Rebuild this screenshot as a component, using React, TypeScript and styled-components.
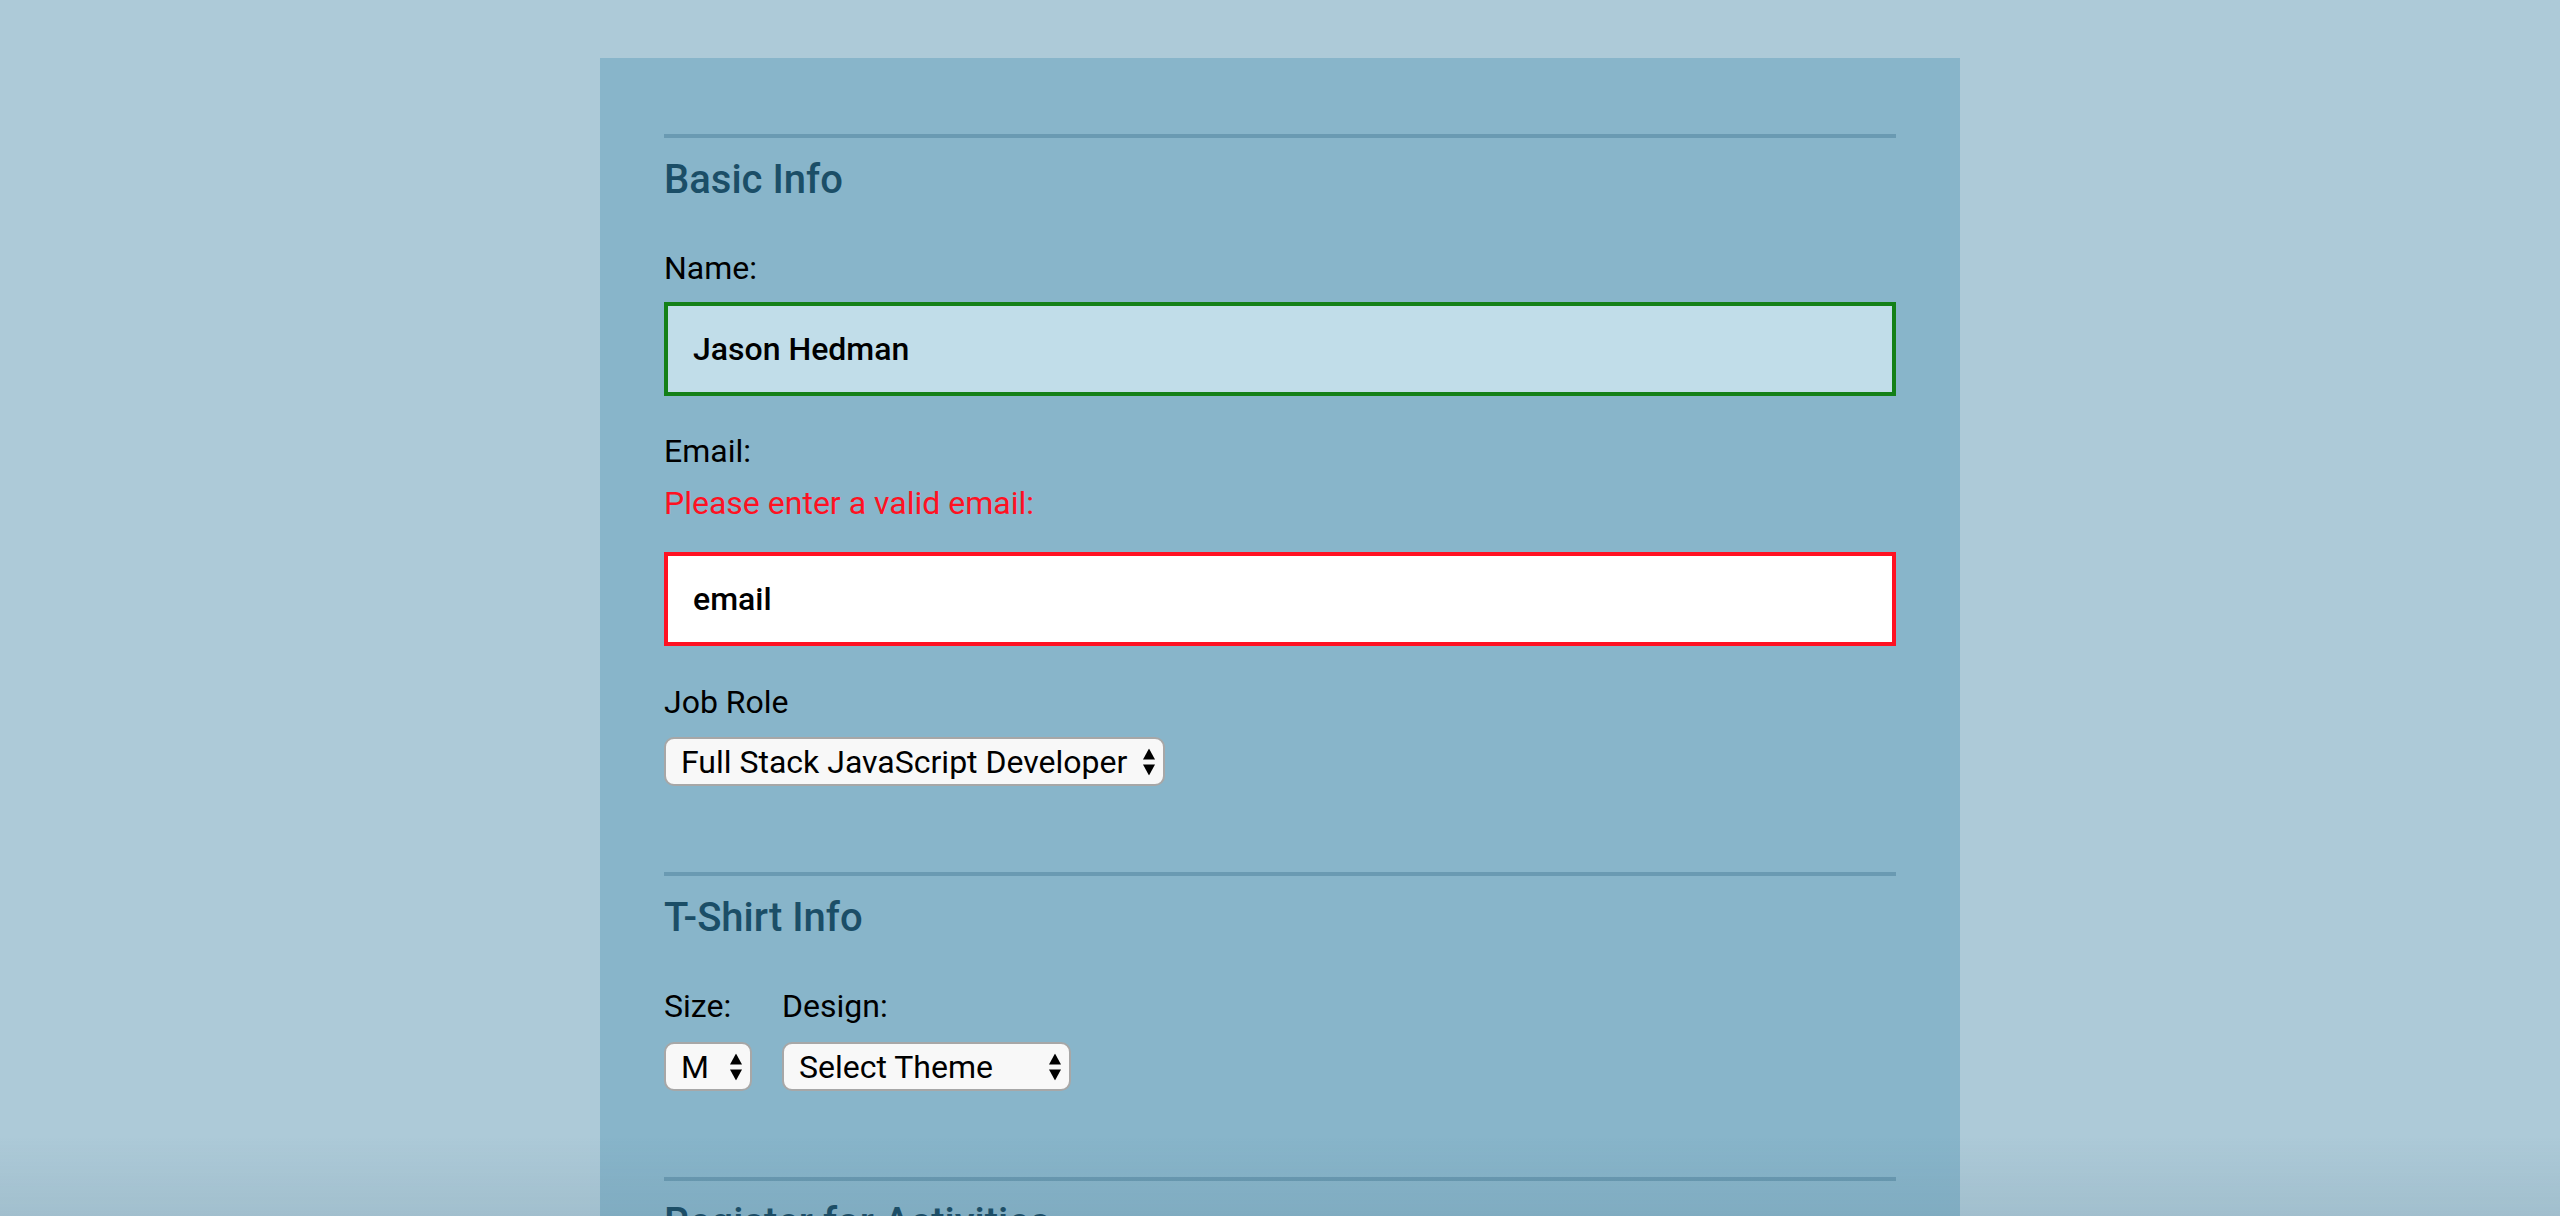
import React from 'react';
import styled, { createGlobalStyle } from 'styled-components';

const GlobalStyle = createGlobalStyle`
  html, body {
    margin: 0;
    padding: 0;
  }
  body {
    background: #adcad8;
    font-family: Roboto, "Liberation Sans", sans-serif;
    color: #000;
  }
`;

// soft darker band at the bottom of the window, like the window shadow in the shot
const Shade = styled.div`
  position: fixed;
  left: 0;
  right: 0;
  bottom: 0;
  height: 80px;
  pointer-events: none;
  background: linear-gradient(to bottom, rgba(50, 85, 105, 0), rgba(50, 85, 105, 0.09));
`;

const Container = styled.form`
  box-sizing: border-box;
  width: 1360px;
  margin: 58px auto 0;
  padding: 76px 64px 240px;
  background: #88b5ca;
`;

const Section = styled.section`
  border-top: 4px solid #6a9ab2;
  padding-top: 18px;
  margin-bottom: 86px;
`;

const Heading = styled.h2`
  margin: 0 0 46px;
  font-size: 40px;
  line-height: 47px;
  font-weight: 500;
  color: #1b4e67;
`;

const Label = styled.label<{ $gap?: number }>`
  display: block;
  font-size: 32px;
  line-height: 38px;
  margin-bottom: ${(p) => p.$gap ?? 15}px;
`;

const ErrorText = styled.div`
  font-size: 32px;
  line-height: 38px;
  color: #ff1122;
  margin: 14px 0 30px;
`;

const TextInput = styled.input<{ $state: 'ok' | 'bad' }>`
  display: block;
  box-sizing: border-box;
  width: 100%;
  height: 94px;
  margin: 0 0 36px;
  padding: 0 25px;
  border: 4px solid ${(p) => (p.$state === 'ok' ? '#148018' : '#ff1122')};
  border-radius: 0;
  background: ${(p) => (p.$state === 'ok' ? '#c1dde9' : '#ffffff')};
  font-family: Roboto, "Liberation Sans", sans-serif;
  font-size: 32px;
  font-weight: 500;
  color: #000;
  outline: none;
`;

const SelectWrap = styled.div<{ $w: number }>`
  position: relative;
  width: ${(p) => p.$w}px;
`;

const Select = styled.select`
  appearance: none;
  -webkit-appearance: none;
  display: block;
  box-sizing: border-box;
  width: 100%;
  height: 49px;
  margin: 0;
  padding: 0 26px 0 15px;
  border: 2px solid #a7a7a7;
  border-radius: 10px;
  background: #f8f8f8;
  font-family: Roboto, "Liberation Sans", sans-serif;
  font-size: 32px;
  color: #000;
  outline: none;
`;

const Arrows = styled.svg`
  position: absolute;
  right: 10px;
  top: 50%;
  transform: translateY(-50%);
  pointer-events: none;
`;

const Row = styled.div`
  display: flex;
  gap: 30px;
`;

const Group = styled.div``;

const CheckRow = styled.label`
  display: block;
  font-size: 32px;
  line-height: 38px;
  margin-bottom: 20px;
`;

function Dropdown({ width, children }: { width: number; children: React.ReactNode }) {
  return (
    <SelectWrap $w={width}>
      <Select>{children}</Select>
      <Arrows width="12" height="27" viewBox="0 0 12 27">
        <polygon points="6,0 12,11 0,11" fill="#000" />
        <polygon points="0,16 12,16 6,27" fill="#000" />
      </Arrows>
    </SelectWrap>
  );
}

export default function App() {
  return (
    <>
      <GlobalStyle />
      <Container onSubmit={(e) => e.preventDefault()}>
        <Section>
          <Heading>Basic Info</Heading>

          <Label htmlFor="name">Name:</Label>
          <TextInput id="name" $state="ok" defaultValue="Jason Hedman" />

          <Label htmlFor="mail" $gap={0}>Email:</Label>
          <ErrorText>Please enter a valid email:</ErrorText>
          <TextInput id="mail" $state="bad" defaultValue="email" style={{ marginBottom: 37 }} />

          <Label htmlFor="title" $gap={16}>Job Role</Label>
          <Dropdown width={501}>
            <option>Full Stack JavaScript Developer</option>
            <option>Front End Developer</option>
            <option>Back End Developer</option>
            <option>Student</option>
            <option>Other</option>
          </Dropdown>
        </Section>

        <Section>
          <Heading>T-Shirt Info</Heading>
          <Row>
            <Group>
              <Label $gap={17}>Size:</Label>
              <Dropdown width={88}>
                <option>M</option>
                <option>S</option>
                <option>L</option>
                <option>XL</option>
              </Dropdown>
            </Group>
            <Group>
              <Label $gap={17}>Design:</Label>
              <Dropdown width={289}>
                <option>Select Theme</option>
                <option>Theme - JS Puns</option>
                <option>Theme - I ♥ JS</option>
              </Dropdown>
            </Group>
          </Row>
        </Section>

        <Section>
          <Heading>Register for Activities</Heading>
          <CheckRow><input type="checkbox" /> Main Conference — $200</CheckRow>
          <CheckRow><input type="checkbox" /> JavaScript Frameworks Workshop — Tuesday 9am-12pm, $100</CheckRow>
          <CheckRow><input type="checkbox" /> JavaScript Libraries Workshop — Tuesday 1pm-4pm, $100</CheckRow>
        </Section>
      </Container>
      <Shade />
    </>
  );
}
